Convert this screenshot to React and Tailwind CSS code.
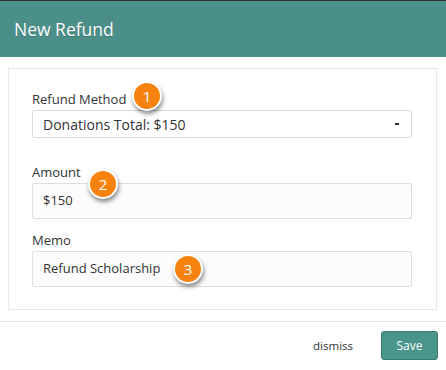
import React from 'react';

const Badge = ({ n, className }) => (
  <div
    className={`absolute w-[30px] h-[30px] rounded-full border-2 border-white bg-[#f7820e] shadow-[1px_3px_4px_rgba(0,0,0,0.45)] flex items-center justify-center text-white text-[15px] leading-none ${className}`}
  >
    {n}
  </div>
);

const Field = ({ label, children, className = '' }) => (
  <div className={className}>
    <div className="text-[13px] leading-[16px] text-[#333] mb-[3px]">{label}</div>
    {children}
  </div>
);

export default function App() {
  return (
    <div className="w-[446px] h-[370px] bg-white border-t border-[#2f2f2f] font-['Open_Sans',sans-serif] relative overflow-hidden">
      <div className="h-[56px] bg-[#4b8f89] px-[14px] flex items-center">
        <h1 className="text-white text-[17.5px] [text-shadow:0_1px_1px_rgba(0,0,0,0.2)]">New Refund</h1>
      </div>

      <div className="pt-[11px] pl-[8px] pr-[9px]">
        <div className="border border-[#e8e8e8] pt-[22px] pb-[22px] pl-[23px] pr-[24px]">
          <Field label="Refund Method">
            <div className="h-[28px] border border-[#d9d9d9] rounded-[3px] bg-white flex items-center justify-between pl-[10px] pr-[12px]">
              <span className="text-[14px] text-[#333]">Donations Total: $150</span>
              <span className="w-[4px] h-[2px] bg-[#333]" />
            </div>
          </Field>

          <Field label="Amount" className="mt-[26px]">
            <div className="h-[36px] border border-[#dedede] rounded-[2px] bg-[#fcfcfc] flex items-center pl-[10px]">
              <span className="text-[13px] text-[#333]">$150</span>
            </div>
          </Field>

          <Field label="Memo" className="mt-[13px]">
            <div className="h-[36px] border border-[#dedede] rounded-[2px] bg-[#fcfcfc] flex items-center pl-[10px]">
              <span className="text-[13px] text-[#333]">Refund Scholarship</span>
            </div>
          </Field>
        </div>
      </div>

      <div className="mt-[11px] border-t border-[#e5e5e5] flex items-center justify-end pt-[9px] pr-[8px]">
        <span className="text-[11.5px] text-[#333] mr-[28px]">dismiss</span>
        <button className="w-[57px] h-[29px] rounded-[3px] bg-[#4a958b] border border-[#3b7a72] text-white text-[12px]">
          Save
        </button>
      </div>

      <Badge n="1" className="left-[132px] top-[80px]" />
      <Badge n="2" className="left-[88px] top-[168px]" />
      <Badge n="3" className="left-[173px] top-[253px]" />
    </div>
  );
}
